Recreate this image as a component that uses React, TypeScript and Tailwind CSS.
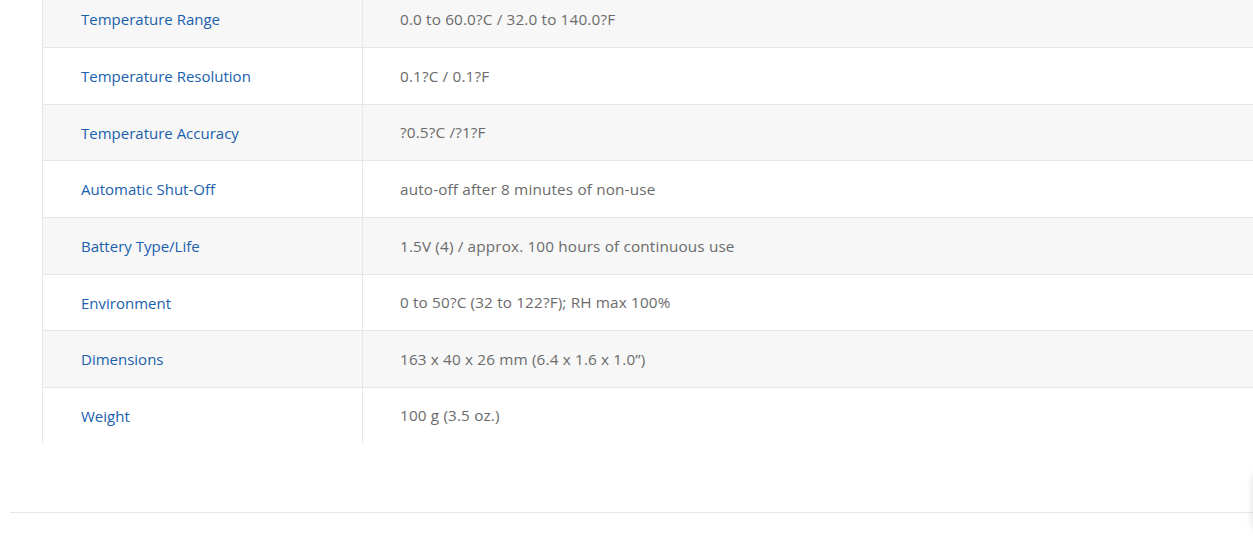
import React from "react";

const rows: [string, string][] = [
  ["Temperature Range", "0.0 to 60.0?C / 32.0 to 140.0?F"],
  ["Temperature Resolution", "0.1?C / 0.1?F"],
  ["Temperature Accuracy", "?0.5?C /?1?F"],
  ["Automatic Shut-Off", "auto-off after 8 minutes of non-use"],
  ["Battery Type/Life", "1.5V (4) / approx. 100 hours of continuous use"],
  ["Environment", "0 to 50?C (32 to 122?F); RH max 100%"],
  ["Dimensions", "163 x 40 x 26 mm (6.4 x 1.6 x 1.0\u201d)"],
  ["Weight", "100 g (3.5 oz.)"],
];

export default function App() {
  return (
    <div
      className="relative w-[1253px] h-[543px] overflow-hidden bg-white"
      style={{ fontFamily: "'Open Sans', 'Noto Sans', sans-serif" }}
    >
      <div className="ml-[42px] mt-[-8.7px] w-[1240px] border-l border-[#e6e6e6]">
        {rows.map(([k, v], i) => {
          const last = i === rows.length - 1;
          return (
            <div
              key={k}
              className={`flex text-[15px] ${last ? "h-[55px]" : "h-[56.67px] border-b border-[#e6e6e6]"} ${i % 2 === 0 ? "bg-[#f7f7f7]" : "bg-white"}`}
            >
              <div className="w-[320px] shrink-0 flex items-center pl-[38px] pt-[1px] text-[#1a60ad] border-r border-[#e6e6e6]">
                {k}
              </div>
              <div className="flex-1 flex items-center pl-[37px] pt-[1px] text-[#6b6b6b] text-[15.3px] tracking-[0.15px]">{v}</div>
            </div>
          );
        })}
      </div>
      <div className="ml-[10px] mt-[69px] h-px bg-[#e8e8e8]" />
      <div className="absolute left-[1256px] top-[475px] w-[40px] h-[55px] rounded-md bg-white shadow-[0_0_8px_2px_rgba(0,0,0,0.18)]" />
    </div>
  );
}
